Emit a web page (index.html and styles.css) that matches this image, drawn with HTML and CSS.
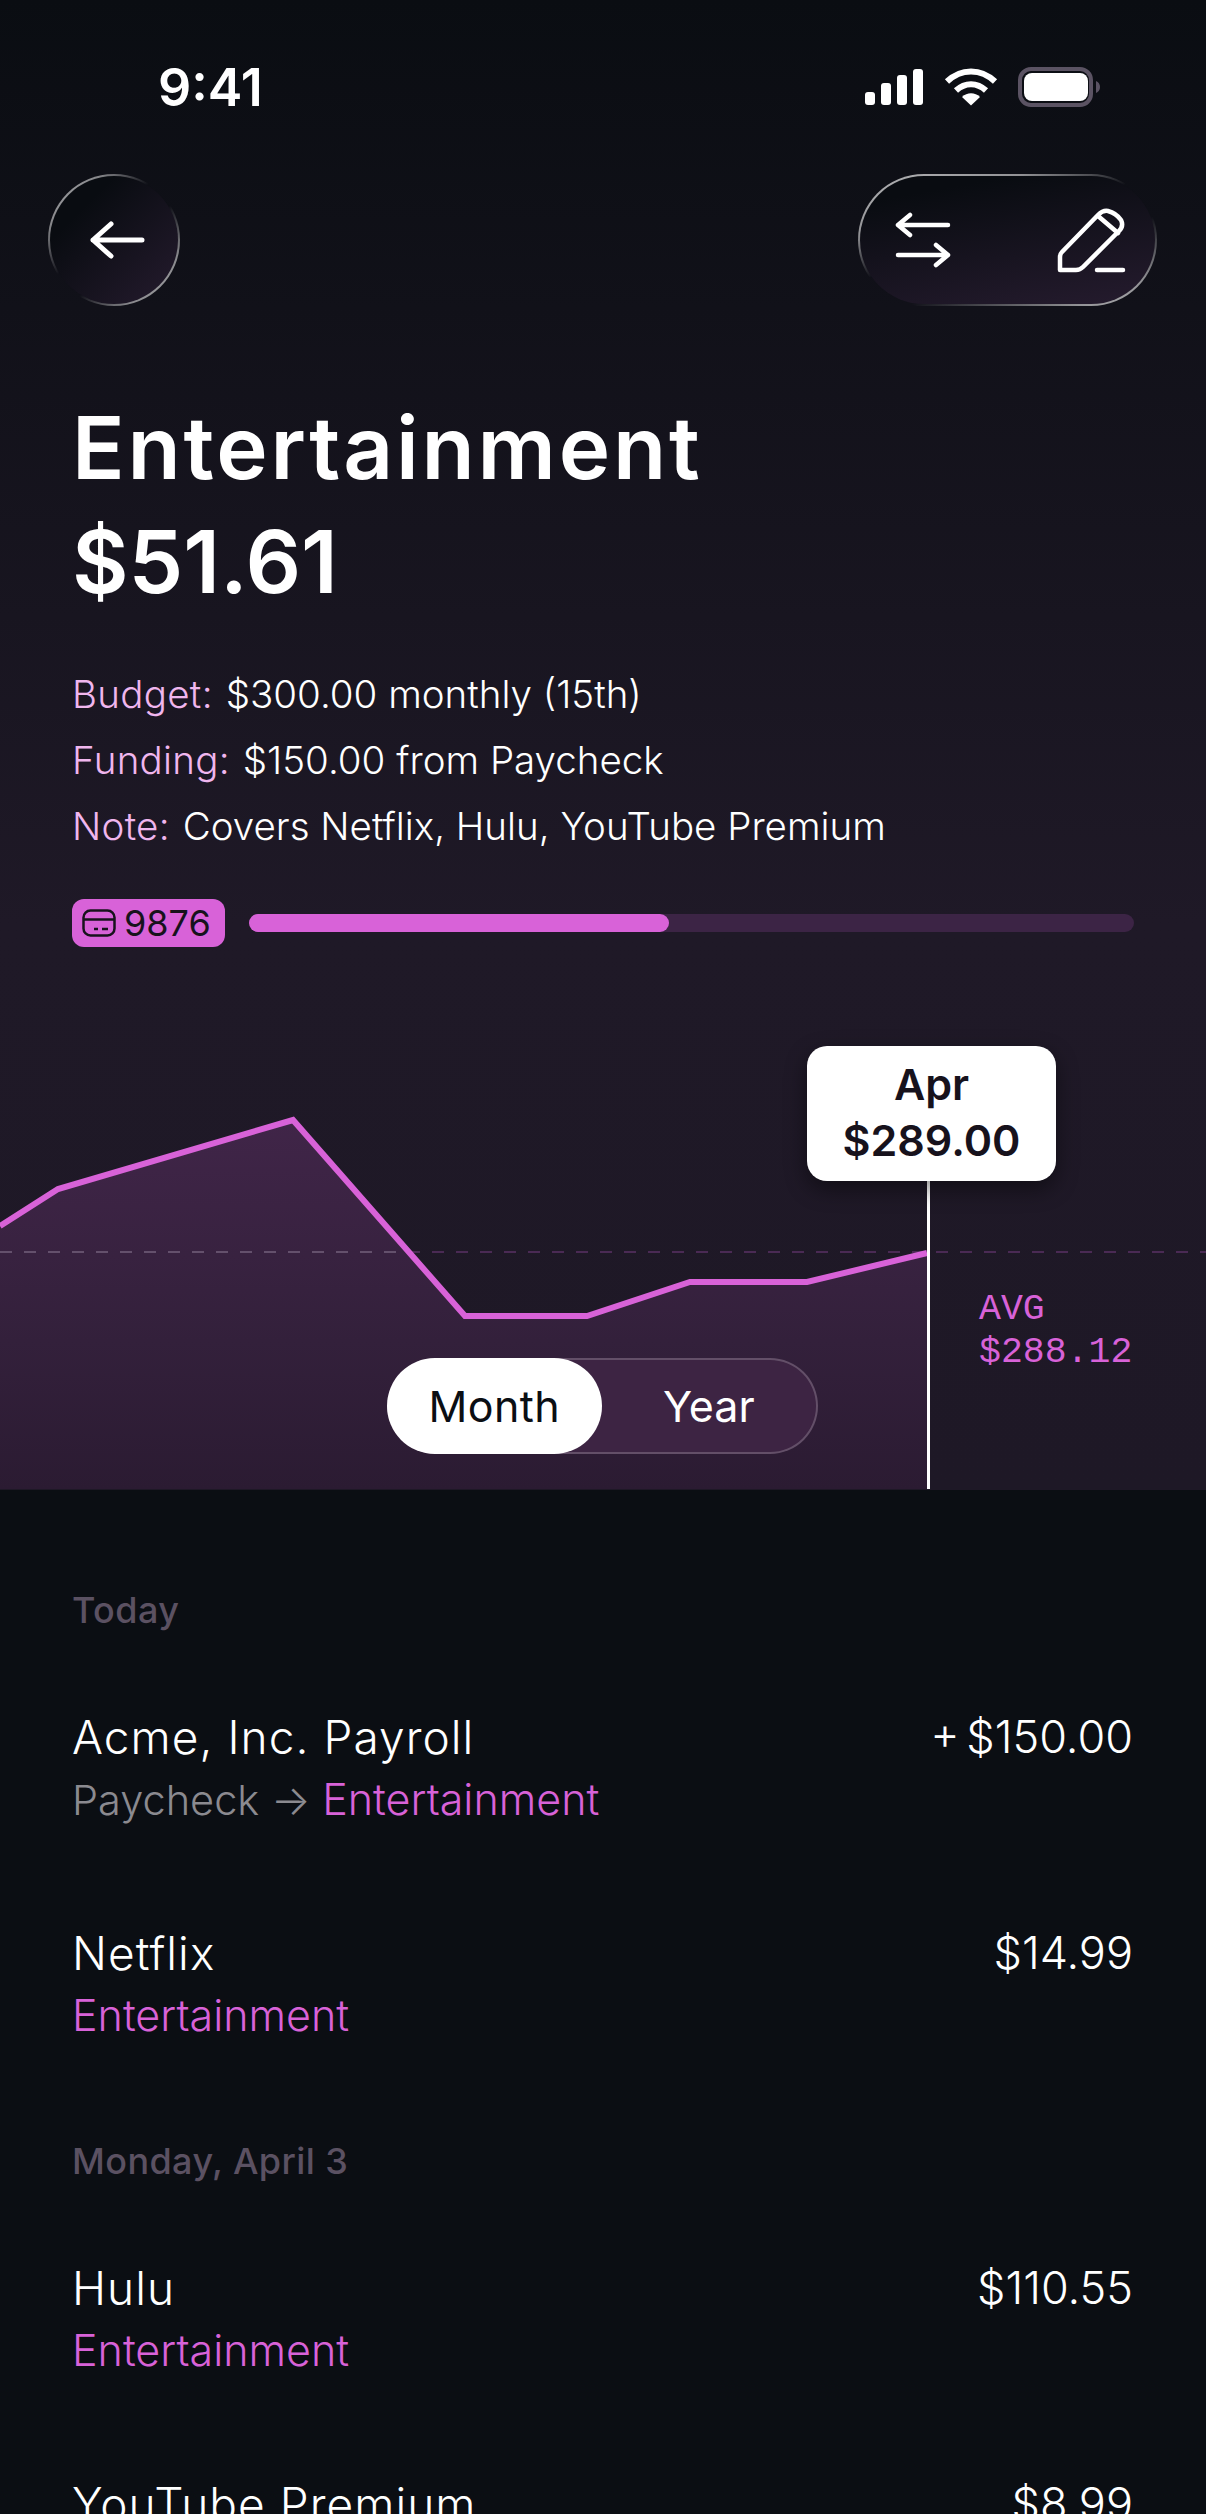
FILE: index.html

```html
<!DOCTYPE html>
<html lang="en">
<head>
  <meta charset="UTF-8">
  <title>Entertainment</title>
  <link rel="stylesheet" href="styles.css">
</head>
<body>
  <section class="top">
    <div class="status">
      <span class="time">9:41</span>
      <svg class="status-icons" width="236" height="40" viewBox="0 0 236 40">
        <!-- signal -->
        <rect x="0" y="25" width="10" height="13" rx="3" fill="#fff"/>
        <rect x="16" y="16" width="10" height="22" rx="3" fill="#fff"/>
        <rect x="32" y="8" width="10" height="30" rx="3" fill="#fff"/>
        <rect x="48" y="2" width="10" height="36" rx="3" fill="#fff"/>
        <!-- wifi -->
        <path d="M82 14.500C96 1 116 1 130 14.500" fill="none" stroke="#fff" stroke-width="6"/>
        <path d="M91 23.500C100 15 112 15 121 23.500" fill="none" stroke="#fff" stroke-width="6"/>
        <path d="M97 30C102 25 110 25 115 30L106 38.500Z" fill="#fff"/>
        <!-- battery -->
        <rect x="155" y="2" width="71" height="36" rx="11" fill="none" stroke="#5b5363" stroke-width="4"/>
        <rect x="159" y="6" width="64" height="28" rx="8" fill="#fff"/>
        <path d="M231 14C233.500 15 235 17 235 20C235 23 233.500 25 231 26Z" fill="#5b5363"/>
      </svg>
    </div>

    <div class="nav">
      <button class="glass round">
        <svg width="60" height="40" viewBox="0 0 60 40">
          <path d="M6 20H55M24 4L6 20L24 36" fill="none" stroke="#fff" stroke-width="5" stroke-linecap="round" stroke-linejoin="round"/>
        </svg>
      </button>
      <div class="glass pill">
        <svg width="60" height="60" viewBox="0 0 60 60">
          <path d="M5 15H55M17 5L5 15L17 25M5 45H55M43 35L55 45L43 55" fill="none" stroke="#fff" stroke-width="4.500" stroke-linecap="round" stroke-linejoin="round"/>
        </svg>
        <svg width="70" height="66" viewBox="0 0 70 66">
          <path d="M4 63V50Q4 47 6 45L42 8Q47 3 52 4Q60 6 65 13Q68 19 63 24L27 60Q24 63 20 63Z" fill="none" stroke="#fff" stroke-width="4.500" stroke-linejoin="round"/>
          <path d="M42 9L62 26M41 63H67" fill="none" stroke="#fff" stroke-width="4.500" stroke-linecap="round"/>
        </svg>
      </div>
    </div>

    <div class="head">
      <h1><span class="title-name">Entertainment</span><br>$51.61</h1>
      <p class="meta"><em>Budget:</em> $300.00 monthly (15th)</p>
      <p class="meta"><em>Funding:</em> $150.00 from Paycheck</p>
      <p class="meta"><em>Note:</em> Covers Netflix, Hulu, YouTube Premium</p>
    </div>

    <div class="progress-row">
      <span class="card-badge">
        <svg width="34" height="28" viewBox="0 0 34 28">
          <rect x="1.500" y="1.500" width="31" height="25" rx="7" fill="none" stroke="#17121c" stroke-width="2.500"/>
          <path d="M2 10.500H32M12 20H16M20 20H26" fill="none" stroke="#17121c" stroke-width="2.500"/>
        </svg>
        9876
      </span>
      <div class="progress"><div class="progress-fill"></div></div>
    </div>

    <div class="chart">
      <svg class="chart-svg" width="1206" height="500" viewBox="0 0 1206 500">
        <defs>
          <linearGradient id="areaFill" x1="0" y1="0" x2="0" y2="1">
            <stop offset="0" stop-color="#402548"/>
            <stop offset="0.6" stop-color="#33203b"/>
            <stop offset="1" stop-color="#2b1b32"/>
          </linearGradient>
        </defs>
        <path d="M0 237L58 200L293 131L465 327H587L690 293H807L927 264V500H0Z" fill="url(#areaFill)"/>
        <!-- dashes read grey over the area, purple over the background -->
        <path d="M0 263H408" stroke="#64506c" stroke-width="2" stroke-dasharray="12 12"/>
        <path d="M408 263H1206" stroke="#4a2a54" stroke-width="2" stroke-dasharray="12 12"/>
        <path d="M0 237L58 200L293 131L465 327H587L690 293H807L927 264" fill="none" stroke="#d862d8" stroke-width="6"/>
        <path d="M928.500 190V500" stroke="#fff" stroke-width="3"/>
      </svg>
      <div class="tooltip">Apr<br>$289.00</div>
      <div class="avg">AVG<br>$288.12</div>
      <div class="toggle">
        <span class="toggle-on">Month</span>
        <span class="toggle-off">Year</span>
      </div>
    </div>
  </section>

  <section class="list">
    <h3 class="day">Today</h3>
    <div class="row">
      <div>
        <div class="row-name">Acme, Inc. Payroll</div>
        <div class="row-sub"><span class="muted">Paycheck → </span><span class="pink">Entertainment</span></div>
      </div>
      <div class="row-amount">+ $150.00</div>
    </div>
    <div class="row">
      <div>
        <div class="row-name">Netflix</div>
        <div class="row-sub pink">Entertainment</div>
      </div>
      <div class="row-amount">$14.99</div>
    </div>
    <h3 class="day">Monday, April 3</h3>
    <div class="row">
      <div>
        <div class="row-name">Hulu</div>
        <div class="row-sub pink">Entertainment</div>
      </div>
      <div class="row-amount">$110.55</div>
    </div>
    <div class="row">
      <div>
        <div class="row-name">YouTube Premium</div>
        <div class="row-sub pink">Entertainment</div>
      </div>
      <div class="row-amount">$8.99</div>
    </div>
  </section>
</body>
</html>
```

FILE: styles.css

```css
html, body {
  margin: 0;
  height: 2514px;
  overflow: hidden;
  background-color: #0b0e13;
}
body {
  font-family: Inter, "Noto Sans", sans-serif;
  color: #fff;
}
.top {
  height: 1490px;
  background: linear-gradient(180deg, #0a0d12 0%, #1f1927 62%, #1e1826 100%);
}
.status {
  display: flex;
  justify-content: space-between;
  height: 174px;
  padding: 67px 105px 0 158px;
  box-sizing: border-box;
}
.time {
  font-size: 52px;
  font-weight: 600;
  line-height: 42px;
}
.nav {
  display: flex;
  justify-content: space-between;
  padding: 0 49px 0 48px;
}
.glass {
  display: flex;
  align-items: center;
  height: 132px;
  box-sizing: border-box;
  border: 2px solid transparent;
  border-radius: 66px;
}
.round {
  justify-content: center;
  width: 132px;
  padding: 0 0 0 5px;
  background:
    linear-gradient(135deg, #090c11 25%, #251b2e 100%) padding-box,
    linear-gradient(135deg, rgba(255,255,255,0.7) 0%, rgba(255,255,255,0.5) 20%, rgba(255,255,255,0) 42%, rgba(255,255,255,0) 58%, rgba(255,255,255,0.5) 80%, rgba(255,255,255,0.7) 100%) border-box;
}
.pill {
  justify-content: space-between;
  width: 299px;
  padding: 0 29px 0 33px;
  background:
    linear-gradient(170deg, #090c11 15%, #251b2e 100%) padding-box,
    linear-gradient(160deg, rgba(255,255,255,0.7) 0%, rgba(255,255,255,0.55) 25%, rgba(255,255,255,0) 45%, rgba(255,255,255,0) 62%, rgba(255,255,255,0.55) 88%, rgba(255,255,255,0.7) 100%) border-box;
}
.head {
  padding: 85px 72px 0 72px;
}
h1 {
  margin: 0 0 42px;
  font-size: 87px;
  font-weight: 600;
  line-height: 114px;
}
.title-name {
  letter-spacing: 2.8px;
}
.meta {
  margin: 0;
  font-size: 38.500px;
  font-weight: 350;
  line-height: 66px;
}
.meta em {
  margin-right: 2px;
  font-style: normal;
  letter-spacing: 0.3px;
  color: #f0b6ee;
}
.progress-row {
  display: flex;
  align-items: center;
  gap: 24px;
  margin-top: 40px;
  padding: 0 72px;
}
.card-badge {
  display: flex;
  align-items: center;
  gap: 8px;
  height: 48px;
  padding: 0 14px 0 10px;
  border-radius: 12px;
  background-color: #d862d8;
  color: #17121c;
  font-size: 36px;
}
.progress {
  flex: 1;
  height: 18px;
  border-radius: 9px;
  background-color: #3c2445;
}
.progress-fill {
  width: 420px;
  height: 18px;
  border-radius: 9px;
  background-color: #d862d8;
}
.chart {
  position: relative;
  height: 542px;
}
.chart-svg {
  position: absolute;
  left: 0;
  bottom: 0;
}
.tooltip {
  position: absolute;
  left: 807px;
  top: 99px;
  width: 249px;
  height: 135px;
  box-sizing: border-box;
  padding-top: 10px;
  border-radius: 20px;
  background-color: #fff;
  box-shadow: 0 8px 22px rgba(0,0,0,0.45);
  color: #17121c;
  font-size: 43px;
  font-weight: 600;
  line-height: 56px;
  text-align: center;
}
.avg {
  position: absolute;
  left: 979px;
  top: 341px;
  color: #d862d8;
  font-family: "Liberation Mono", monospace;
  font-size: 36.500px;
  line-height: 43px;
}
.toggle {
  position: absolute;
  left: 387px;
  top: 411px;
  display: flex;
  width: 431px;
  height: 96px;
  box-sizing: border-box;
  border: 2px solid rgba(255,255,255,0.2);
  border-radius: 48px;
  background-color: #3d2443;
  font-size: 43px;
  line-height: 96px;
}
.toggle-on, .toggle-off {
  display: block;
  margin: -2px 0;
  width: 216px;
  text-align: center;
}
.toggle-on {
  margin-left: -2px;
  border-radius: 48px;
  background-color: #fff;
  color: #0b0e13;
  letter-spacing: 0.4px;
}
.list {
  padding: 0 73px 0 72px;
}
.day {
  margin: 0;
  padding-top: 98px;
  color: #5b5162;
  font-size: 36px;
  font-weight: 500;
  letter-spacing: 0.4px;
  line-height: 44px;
}
.row + .day {
  padding-top: 75px;
}
.row {
  display: flex;
  justify-content: space-between;
  height: 216px;
  padding-top: 75px;
  box-sizing: border-box;
}
.row-name {
  font-size: 46px;
  font-weight: 350;
  letter-spacing: 1.05px;
  line-height: 60px;
}
.row-amount {
  font-size: 45px;
  font-weight: 350;
  line-height: 60px;
  word-spacing: -6px;
}
.row-sub {
  font-size: 43px;
  font-weight: 350;
  line-height: 64px;
}
.muted {
  color: #8b8a90;
  font-size: 41.500px;
}
.pink {
  color: #d862d8;
}
```
